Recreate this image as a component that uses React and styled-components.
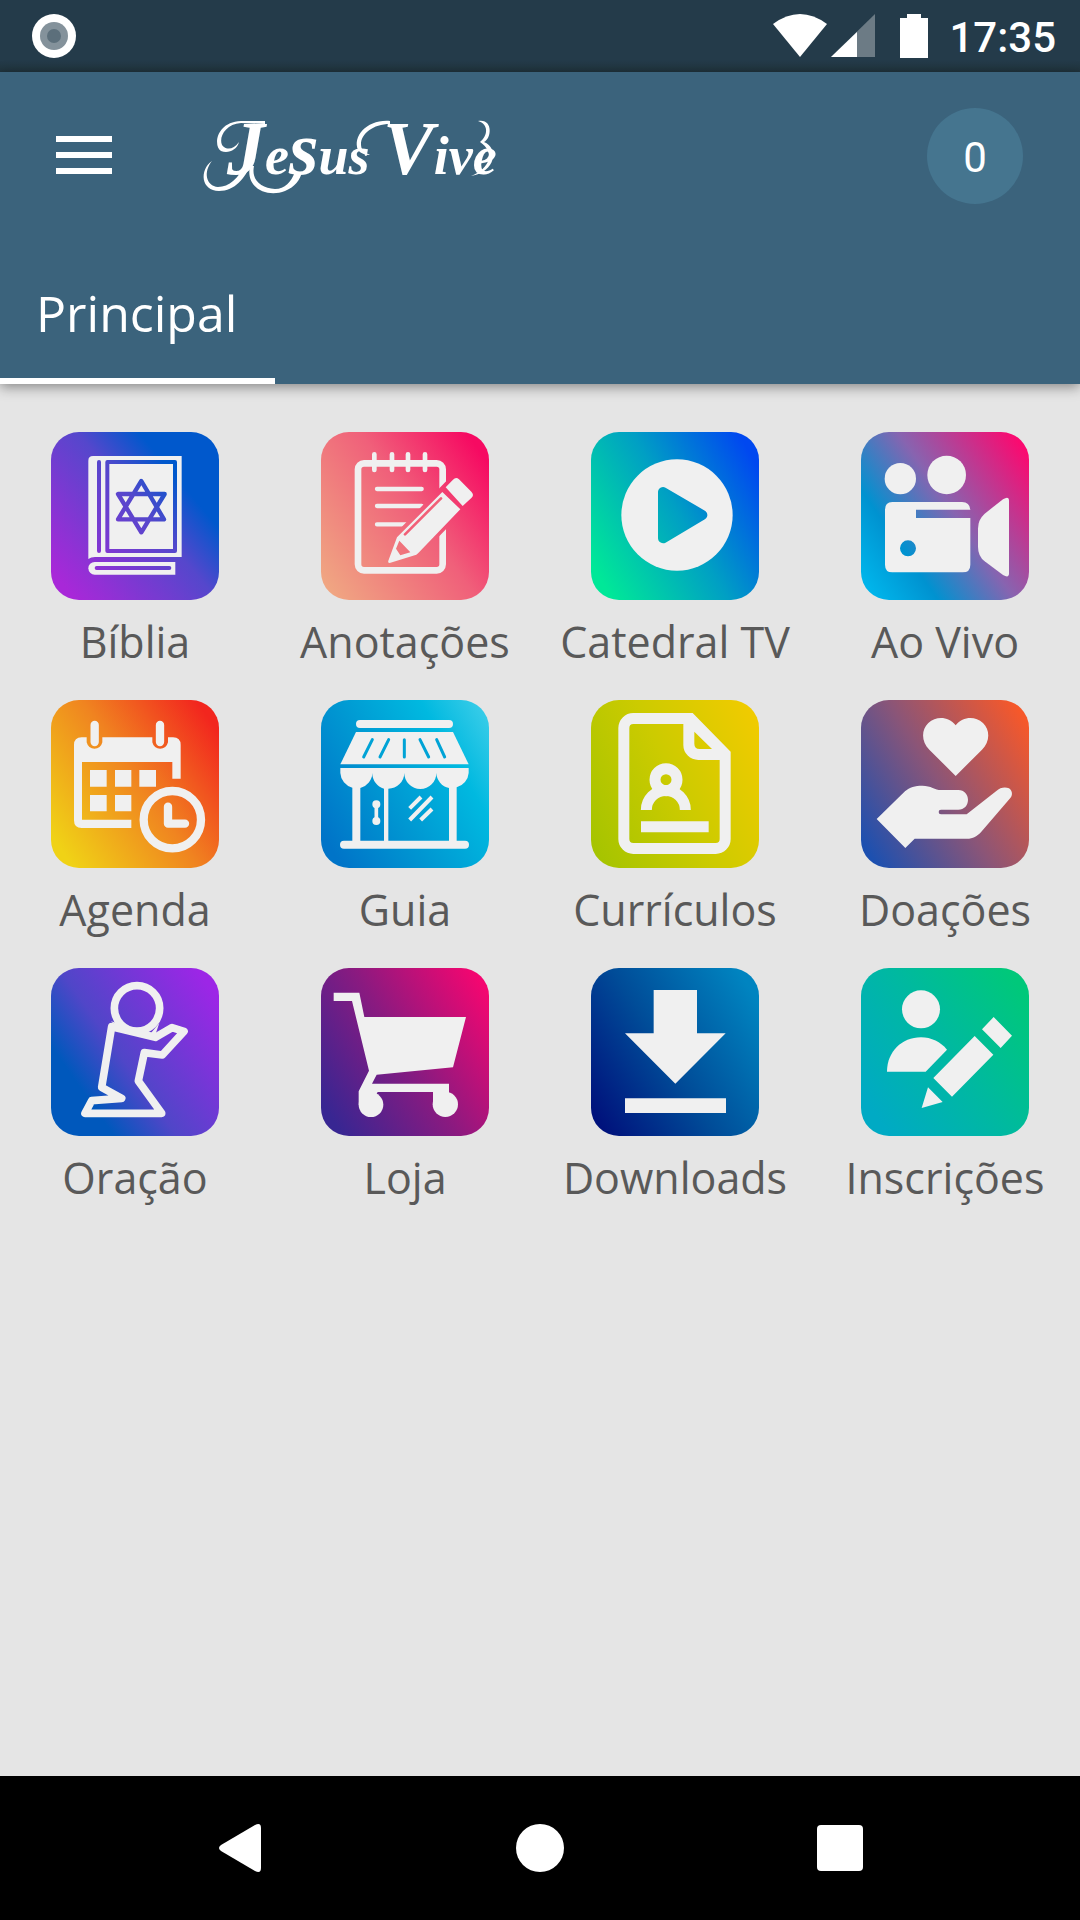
import React from "react";
import styled, { createGlobalStyle } from "styled-components";

const GlobalStyle = createGlobalStyle`
  *, *::before, *::after { box-sizing: border-box; }
  body { margin: 0; background: #e5e5e5; font-family: "Open Sans", "Noto Sans", sans-serif; }
  button { border: 0; padding: 0; background: none; color: inherit; font: inherit; cursor: pointer; }
`;

const Screen = styled.div`
  display: flex;
  flex-direction: column;
  min-height: 100vh;
`;

const StatusBar = styled.div`
  display: flex;
  align-items: center;
  justify-content: space-between;
  height: 72px;
  padding: 0 24px 0 32px;
  background: linear-gradient(#243b4a 84%, #20343d);
  color: #fff;
`;

const StatusGroup = styled.div`
  display: flex;
  align-items: center;
`;

const Clock = styled.time`
  margin-left: 20px;
  padding-top: 4px;
  font: 500 42px/48px Roboto, sans-serif;
`;

const Header = styled.header`
  position: relative;
  background: #3b637c;
  color: #fff;
  box-shadow: 0 3px 12px rgba(0, 0, 0, 0.42);
`;

const Toolbar = styled.div`
  display: flex;
  align-items: center;
  height: 168px;
  padding: 0 57px 0 44px;
`;

const MenuButton = styled.button`
  display: flex;
  align-items: center;
  justify-content: center;
  width: 80px;
  height: 80px;
  && { padding-bottom: 2px; }
`;

const Brand = styled.h1`
  position: relative;
  width: 292px;
  height: 80px;
  margin: 0 auto 0 79px;
  padding-left: 24px;
  font: italic bold 54px/80px "Liberation Serif", serif;
  white-space: nowrap;
`;

const BigLetter = styled.span`
  font-size: 76px;
  line-height: 64px;
`;

const Swash = styled.svg`
  position: absolute;
  left: 0;
  top: 0;
  overflow: visible;
`;

const Counter = styled.button`
  width: 96px;
  height: 96px;
  border-radius: 50%;
  && { padding-top: 4px; background: #45758f; font: 400 42px/92px Roboto, sans-serif; }
`;

const Tabs = styled.nav`
  display: flex;
`;

const Tab = styled.button`
  height: 144px;
  border-bottom: 6px solid #fff;
  && { padding: 8px 38px 0 36px; font-size: 50px; line-height: 72px; }
`;

const Grid = styled.main`
  flex: 1;
  display: grid;
  grid-template-columns: repeat(4, 1fr);
  align-content: start;
  row-gap: 28px;
  padding: 48px 0;
`;

const AppLink = styled.a`
  display: flex;
  flex-direction: column;
  align-items: center;
  gap: 12px;
  color: #595959;
  font-size: 43px;
  line-height: 60px;
  text-decoration: none;
  white-space: nowrap;
`;

const Tile = styled.span`
  display: block;
  width: 168px;
  height: 168px;
  border-radius: 28px;
  background: linear-gradient(${(p) => p.$fill});

  svg { display: block; width: 100%; height: 100%; }
`;

const NavBar = styled.nav`
  display: grid;
  grid-template-columns: repeat(3, 1fr);
  place-items: center;
  height: 144px;
  padding: 0 90px;
  background: #000;
`;

const NavButton = styled.button`
  display: flex;
  align-items: center;
  justify-content: center;
  width: 96px;
  height: 96px;
`;

const INK = "#f0f0f0";

const art = {
  biblia: (
    <>
      <mask id="book">
        <rect width="504" height="504" fill="#fff" />
        <g fill="none" stroke="#000" strokeWidth="12" strokeLinejoin="round" strokeLinecap="round">
          <path d="M144 90V357M169 90H372V357H169Z M137 408H355" />
          <path strokeWidth="13" d="M271 147 339 262H201ZM271 301 201 186H341Z" />
        </g>
      </mask>
      <g mask="url(#book)" fill={INK}>
        <path d="M126 72H392V375H132Q120 375 112 381V86Q112 72 126 72Z" />
        <path d="M131 390H373V428H131A19 19 0 0 1 131 390Z" />
      </g>
    </>
  ),
  anotacoes: (
    <>
      <mask id="pad">
        <rect width="504" height="504" fill="#fff" />
        <path d="M228 315 400 138 456 192 286 368 202 394Z" stroke="#000" strokeWidth="22" strokeLinejoin="round" />
      </mask>
      <g mask="url(#pad)" fill="none" stroke={INK} strokeLinecap="round">
        <rect x="111" y="94" width="254" height="321" rx="18" strokeWidth="20" />
        <path strokeWidth="13" d="M168 171H302M168 222H302M168 277H270" />
      </g>
      <path stroke={INK} strokeWidth="14" strokeLinecap="round" d="M160 67V114M213 67V114M261 67V114M312 67V114" />
      <path fill={INK} d="M374 166 396 143Q405 134 414 142L451 179Q461 189 451 198L425 222Z" />
      <path
        fill={INK}
        fillRule="evenodd"
        d="M364 180 418 232 292 363 286 368 206 393Q200 393 202 386L228 316ZM235 326 225 350 238 370 268 361Z"
      />
      <path stroke="#f25f77" strokeWidth="8" strokeLinecap="round" d="M360 199 252 307" />
    </>
  ),
  tv: (
    <>
      <mask id="play">
        <rect width="504" height="504" fill="#fff" />
        <path d="M216 180V319L334 249Z" stroke="#000" strokeWidth="30" strokeLinejoin="round" />
      </mask>
      <circle mask="url(#play)" cx="258" cy="249" r="167" fill={INK} />
    </>
  ),
  aovivo: (
    <g fill={INK}>
      <circle cx="118" cy="140" r="47" />
      <circle cx="257" cy="129" r="58" />
      <path
        fillRule="evenodd"
        d="M94 210H303Q326 210 328 233H165V258H328V398Q328 421 305 421H94Q72 421 72 398V233Q72 210 94 210ZM141 325A24 24 0 1 0 141 373A24 24 0 1 0 141 325Z"
      />
      <path d="M351 290Q351 263 371 245L426 202Q444 190 444 207V424Q444 440 426 429L371 388Q351 372 351 344Z" />
    </g>
  ),
  agenda: (
    <g fill={INK}>
      <path d="M92 112H107V127A24 24 0 0 0 154 127V112H304V127A24 24 0 0 0 351 127V112H366Q389 112 389 135V236H364V186H93V359H241V384H92Q69 384 69 361V135Q69 112 92 112Z" />
      <path d="M117 210H167V260H117ZM192 210H241V260H192ZM265 210H315V260H265ZM117 285H167V334H117ZM192 285H241V334H192Z" />
      <g fill="none" stroke={INK} strokeLinecap="round" strokeLinejoin="round">
        <circle cx="364" cy="359" r="86" strokeWidth="25" />
        <path strokeWidth="25" d="M351 320V371H402M131 75V126M327 75V126" />
      </g>
    </g>
  ),
  guia: (
    <g fill={INK}>
      <path d="M105 96H396L443 193H58Z" />
      <path d="M58 204H443V219A48 48 0 0 1 407 262V424H384V264A48 48 0 0 1 346 219A48 48 0 0 1 250 219A48 48 0 0 1 202 266V424H189V266A48 48 0 0 1 154 219A48 48 0 0 1 118 264V424H94V263A48 48 0 0 1 58 219Z" />
      <g fill="none" stroke={INK} strokeLinecap="round">
        <path strokeWidth="24" d="M117 72H384M69 434H432" />
        <path strokeWidth="24" d="M166 313V313.1M166 363V363.1" />
        <path strokeWidth="11" d="M166 313V363" />
        <path strokeWidth="12" strokeLinecap="butt" d="M266 325 300 291M266 360 333 291M299 360 333 327" />
      </g>
      <path
        fill="none"
        stroke="#00a3d6"
        strokeWidth="9"
        strokeLinecap="round"
        d="M154 119 128 171M203 119 177 171M250 119V171M297 119 323 171M347 119 371 171"
      />
    </g>
  ),
  curriculos: (
    <g fill="none" stroke={INK} strokeWidth="33">
      <path
        fill={INK}
        stroke="none"
        fillRule="evenodd"
        d="M127 39H305L419 155V417A45 45 0 0 1 374 462H127A45 45 0 0 1 82 417V84A45 45 0 0 1 127 39ZM127 72A12 12 0 0 0 115 84V417A12 12 0 0 0 127 429H374A12 12 0 0 0 386 417V180H322A45 45 0 0 1 277 135V72ZM310 95V131Q310 147 326 147H363Z"
      />
      <circle cx="225" cy="239" r="33" />
      <path d="M166 330A58 58 0 0 1 283 330M150 380H353" />
    </g>
  ),
  doacoes: (
    <g fill={INK}>
      <path d="M284 228 205 149C181 125 180 91 202 69C226 48 262 49 284 76C306 49 342 48 366 69C388 91 387 125 363 149Z" />
      <path d="M47 357 132 274C146 262 162 257 184 257C210 257 222 270 240 270H292C310 270 321 284 321 299C321 316 309 329 292 329H240A7 7 0 0 0 240 343H317L406 273C418 261 434 260 444 265C455 272 455 287 448 294L361 395C348 409 336 416 318 416H161L133 444Z" />
    </g>
  ),
  oracao: (
    <g fill="none" stroke={INK} strokeWidth="23" strokeLinejoin="round">
      <circle cx="258" cy="121" r="68" />
      <path d="M182 176 152 358 212 391 122 398 102 436H332L262 339 280 254 334 261 399 190 363 179 313 208Z" />
      <path fill={INK} stroke="none" d="M180 160 206 185 313 200 325 165 300 195Z" />
    </g>
  ),
  loja: (
    <g fill={INK}>
      <path d="M38 74H115L130 147H435L396 298 167 320 153 347H384V380H336V372H170L150 408H113V370L144 308 93 99H38ZM113 370H150V410H113ZM336 370H373V410H336Z" />
      <circle cx="150" cy="410" r="37" />
      <circle cx="373" cy="409" r="38" />
    </g>
  ),
  downloads: <path fill={INK} d="M188 66H318V196H404L253 347 102 196H188ZM102 391H405V435H102Z" />,
  inscricoes: (
    <g fill={INK}>
      <circle cx="180" cy="124" r="57" />
      <path d="M78 311C78 252 122 208 180 208C211 208 239 222 258 245L194 311Z" />
      <path d="M398 147 453 203 419 240 363 184ZM341 204 397 260 273 386 217 330ZM201 358 245 402 182 420Z" />
    </g>
  ),
};

const apps = [
  { id: "biblia", label: "Bíblia", fill: "50deg, #a828d8 8%, #5547cc 54%, #0058cc 74%" },
  { id: "anotacoes", label: "Anotações", fill: "55deg, #f0a682 5%, #f0607a 55%, #f60a62 92%" },
  { id: "tv", label: "Catedral TV", fill: "60deg, #00e898 8%, #009fc4 52%, #0048f0 92%" },
  { id: "aovivo", label: "Ao Vivo", fill: "55deg, #00b4ea 6%, #0092d0 27%, #8764b0 54%, #fa0a70 94%" },
  { id: "agenda", label: "Agenda", fill: "55deg, #f0d216 8%, #f08420 52%, #f2261e 92%" },
  { id: "guia", label: "Guia", fill: "60deg, #0074c8 8%, #0098d2 42%, #00b9e0 74%, #38cce8 96%" },
  { id: "curriculos", label: "Currículos", fill: "65deg, #a6c400 5%, #cccb00 50%, #f0cb00 95%" },
  { id: "doacoes", label: "Doações", fill: "58deg, #1c50b0 6%, #8a5578 48%, #f6582a 94%" },
  { id: "oracao", label: "Oração", fill: "55deg, #0058bc 22%, #5046c8 44%, #9c26e6 92%" },
  { id: "loja", label: "Loja", fill: "58deg, #382692 8%, #8a1a80 50%, #f40670 94%" },
  { id: "downloads", label: "Downloads", fill: "58deg, #00127c 6%, #004c98 46%, #0084c0 92%" },
  { id: "inscricoes", label: "Inscrições", fill: "55deg, #00aac4 10%, #00b8a2 50%, #00c87a 92%" },
];

export default function App() {
  return (
    <Screen>
      <GlobalStyle />
      <StatusBar>
        <svg width="44" height="44" viewBox="0 0 44 44" aria-hidden="true">
          <circle cx="22" cy="22" r="22" fill="#fff" />
          <circle cx="22" cy="22" r="14" fill="#84929b" />
          <circle cx="22" cy="22" r="7" fill="#5c6f7b" />
        </svg>
        <StatusGroup>
          <svg width="156" height="44" viewBox="0 0 156 44" fill="#fff" aria-hidden="true">
            <path d="M0 10Q27 -10 54 10L27 43Z" />
            <path d="M58 43 102 0V43Z" opacity="0.33" />
            <path d="M58 43 84 18V43Z" />
            <path d="M127 4H134V0H148V4H155V44H127Z" />
          </svg>
          <Clock>17:35</Clock>
        </StatusGroup>
      </StatusBar>

      <Header>
        <Toolbar>
          <MenuButton aria-label="Menu">
            <svg width="56" height="38" viewBox="0 0 56 38" fill="#fff">
              <path d="M0 0H56V6H0ZM0 16H56V22H0ZM0 32H56V38H0Z" />
            </svg>
          </MenuButton>
          <Brand>
            <BigLetter>J</BigLetter>e<BigLetter>s</BigLetter>us <BigLetter>V</BigLetter>ive
            <Swash width="292" height="80" viewBox="0 0 292 80" fill="#fff" aria-hidden="true">
              <path d="M9 45C-4 54 -2 75 16 75C32 75 42 62 48 48L42 48C36 62 26 71 15 71C3 70 0 56 9 45Z" />
              <path d="M62 5H38C13 6 10 30 18 35C25 38 34 34 36 26C31 33 25 34 21 31C14 26 20 8 38 7L62 8Z" />
              <path d="M187 5C165 3 149 20 155 34C158 38 163 39 167 39C160 36 158 33 158 28C158 18 170 8 187 8Z" />
              <path d="M275 5C290 2 289 22 281 26C296 32 293 56 268 60C288 52 292 36 277 26C285 20 286 8 275 5Z" />
              <path d="M47 50C42 72 64 82 82 75C92 71 97 64 99 56L92 56C88 66 82 73 72 73C58 72 48 64 51 50Z" />
            </Swash>
          </Brand>
          <Counter>0</Counter>
        </Toolbar>
        <Tabs>
          <Tab aria-current="page">Principal</Tab>
        </Tabs>
      </Header>

      <Grid>
        {apps.map((app) => (
          <AppLink key={app.id} href={`#${app.id}`}>
            <Tile $fill={app.fill}>
              <svg viewBox="0 0 504 504" aria-hidden="true">{art[app.id]}</svg>
            </Tile>
            {app.label}
          </AppLink>
        ))}
      </Grid>

      <NavBar>
        <NavButton aria-label="Voltar">
          <svg width="42" height="48" viewBox="0 0 42 48" fill="#fff">
            <path d="M36 1Q42 -2 42 4V44Q42 50 36 47L2 27Q-2 24 2 21Z" />
          </svg>
        </NavButton>
        <NavButton aria-label="Início">
          <svg width="48" height="48" viewBox="0 0 48 48" fill="#fff">
            <circle cx="24" cy="24" r="24" />
          </svg>
        </NavButton>
        <NavButton aria-label="Recentes">
          <svg width="46" height="46" viewBox="0 0 46 46" fill="#fff">
            <rect width="46" height="46" rx="4" />
          </svg>
        </NavButton>
      </NavBar>
    </Screen>
  );
}
